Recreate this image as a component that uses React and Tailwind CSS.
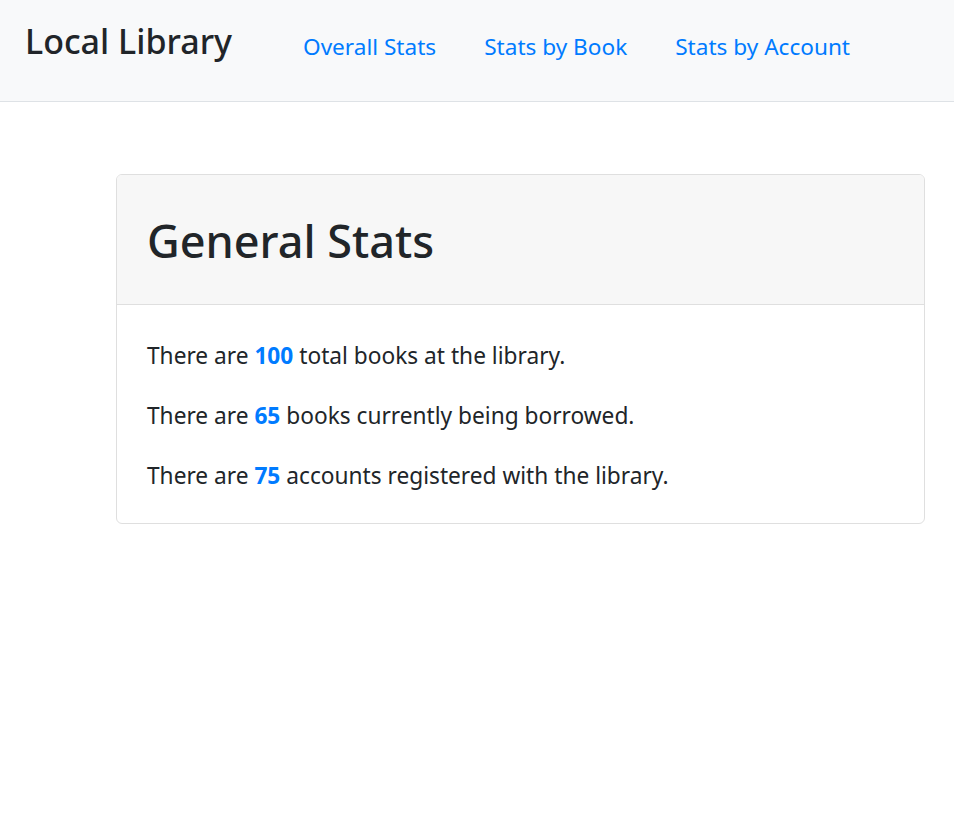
import React from 'react';

const navLinks = ['Overall Stats', 'Stats by Book', 'Stats by Account'];

const stats = [
    { count: 100, rest: 'total books at the library.' },
    { count: 65, rest: 'books currently being borrowed.' },
    { count: 75, rest: 'accounts registered with the library.' }
];

const App = () => {
    return (
        <div className="min-h-screen bg-white text-[#212529] font-['Noto_Sans',sans-serif]">
            {/* Navbar */}
            <nav className="h-[102px] bg-[#f8f9fa] border-b border-[#dee2e6] flex items-start">
                <a className="ml-[25px] mt-[17px] text-[34px] font-medium leading-[48px] text-[#212529] whitespace-nowrap">
                    Local Library
                </a>
                <ul className="flex ml-[47px] mt-[28px]">
                    {navLinks.map(link => (
                        <li key={link}>
                            <a className="block px-[24px] text-[22.6px] leading-[38px] text-[#007bff] whitespace-nowrap">{link}</a>
                        </li>
                    ))}
                </ul>
            </nav>

            {/* Card */}
            <div className="ml-[116px] mt-[72px] w-[809px] border border-[#dfdfdf] rounded-md overflow-hidden">
                <div className="h-[130px] bg-[#f7f7f7] border-b border-[#dfdfdf] flex items-center px-[30px]">
                    <h1 className="text-[45px] font-medium leading-none pt-[2px]">General Stats</h1>
                </div>
                <div className="px-[30px] pt-[33px] pb-[29px] flex flex-col gap-[24px]">
                    {stats.map(s => (
                        <p key={s.count} className="text-[22.7px] leading-[36px]">
                            There are <span className="font-bold text-[#007bff]">{s.count}</span> {s.rest}
                        </p>
                    ))}
                </div>
            </div>
        </div>
    );
};

export default App;
